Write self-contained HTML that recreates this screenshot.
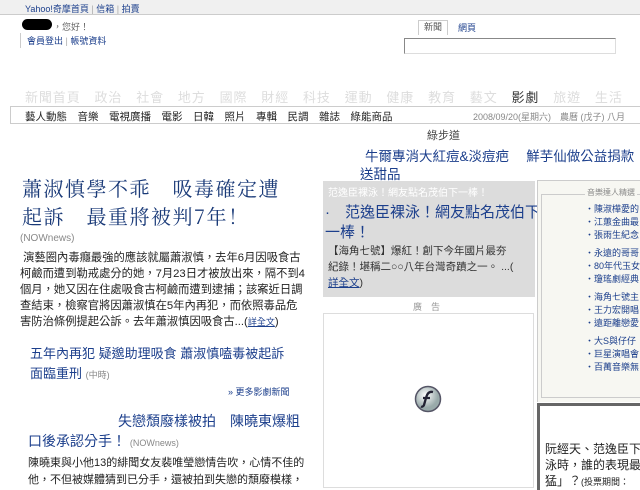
<!DOCTYPE html>
<html><head><meta charset="utf-8"><style>
*{margin:0;padding:0;box-sizing:border-box}
body{width:640px;height:490px;overflow:hidden;background:#fff;position:relative;font-family:"Liberation Sans","Noto Sans CJK TC",sans-serif;color:#333}
.a{position:absolute;white-space:nowrap}
.b{color:#1c3f8c}
</style></head><body>
<div class="a" style="left:0;top:0;width:640px;height:15px;background:#f0f0f0;border-bottom:1px solid #ccc"></div>
<div class="a" style="left:25px;top:2px;font-size:9px;color:#1c3f8c">Yahoo!奇摩首頁 <span style="color:#aaa">|</span> 信箱 <span style="color:#aaa">|</span> 拍賣</div>
<div class="a" style="left:22px;top:19px;width:30px;height:11px;background:#000;border-radius:6px"></div>
<div class="a" style="left:53px;top:20px;font-size:9px;color:#666">，您好！</div>
<div class="a" style="left:27px;top:34px;font-size:9px;color:#1c3f8c">會員登出 <span style="color:#aaa">|</span> 帳號資料</div>
<div class="a" style="left:20px;top:33px;width:1px;height:15px;background:#ccc"></div>
<div class="a" style="left:418px;top:20px;width:30px;height:15px;border:1px solid #ccc;border-bottom:none;font-size:9px;text-align:center;line-height:13px;color:#555">新聞</div>
<div class="a" style="left:458px;top:21px;font-size:9px;color:#1c3f8c">網頁</div>
<div class="a" style="left:404px;top:38px;width:212px;height:16px;border:1px solid #888;border-right-color:#ddd;border-bottom-color:#ddd;background:#fff"></div>
<div class="a" style="left:25px;top:87px;font-size:13px;color:#ddd;letter-spacing:0.9px">新聞首頁　政治　社會　地方　國際　財經　科技　運動　健康　教育　藝文　<b style="color:#333;font-weight:normal">影劇</b>　旅遊　生活</div>
<div class="a" style="left:10px;top:106px;width:640px;height:18px;border:1px solid #ccc;border-right:none"></div>
<div class="a" style="left:25px;top:109px;font-size:10.5px;color:#222;word-spacing:1px">藝人動態　音樂　電視廣播　電影　日韓　照片　專輯　民調　雜誌　綠能商品</div>
<div class="a" style="left:473px;top:110px;font-size:9px;color:#888">2008/09/20(星期六)　農曆 (戊子) 八月</div>
<div class="a" style="left:427px;top:127px;font-size:11px;color:#444">綠步道</div>
<div class="a b" style="left:365px;top:145px;font-size:13.5px">牛爾專消大紅痘&amp;淡痘疤　 鮮芋仙做公益捐款</div>
<div class="a b" style="left:360px;top:163px;font-size:13.5px">送甜品</div>
<div class="a" style="left:22px;top:174px;font-size:20px;line-height:28px;font-family:'Noto Serif CJK SC','Noto Serif CJK TC',serif;color:#1a3a78;letter-spacing:1.5px">蕭淑慎學不乖　吸毒確定遭<br>起訴　最重將被判7年！</div>
<div class="a" style="left:20px;top:233px;font-size:10px;color:#888">(NOWnews)</div>
<div class="a" style="left:20px;top:250px;font-size:11.3px;line-height:16px;color:#222">&nbsp;演藝圈內毒癮最強的應該就屬蕭淑慎，去年6月因吸食古<br>柯鹼而遭到勒戒處分的她，7月23日才被放出來，隔不到4<br>個月，她又因在住處吸食古柯鹼而遭到逮捕；該案近日調<br>查結束，檢察官將因蕭淑慎在5年內再犯，而依照毒品危<br>害防治條例提起公訴。去年蕭淑慎因吸食古...(<u class="b" style="font-size:9px">詳全文</u>)</div>
<div class="a b" style="left:30px;top:344px;font-size:13px;line-height:20px">五年內再犯 疑邈助理吸食 蕭淑慎嗑毒被起訴<br>面臨重刑 <span style="font-size:9px;color:#888">(中時)</span></div>
<div class="a" style="left:228px;top:385px;font-size:9px;color:#1c3f8c">» 更多影劇新聞</div>
<div class="a b" style="left:118px;top:411px;font-size:14px">失戀頹廢樣被拍　陳曉東爆粗</div>
<div class="a b" style="left:28px;top:431px;font-size:14px">口後承認分手！ <span style="font-size:9px;color:#888">(NOWnews)</span></div>
<div class="a" style="left:28px;top:455px;font-size:11px;line-height:17px;color:#222">陳曉東與小他13的緋聞女友裴唯瑩戀情告吹，心情不佳的<br>他，不但被媒體猜到已分手，還被拍到失戀的頹廢模樣，</div>
<div class="a" style="left:323px;top:181px;width:212px;height:116px;background:#dcdcdc"></div>
<div class="a" style="left:328px;top:184px;font-size:10px;color:#fff">范逸臣裸泳！網友點名茂伯下一棒！</div>
<div class="a b" style="left:325px;top:203px;font-size:15px;line-height:20px">·　范逸臣裸泳！網友點名茂伯下<br>一棒！</div>
<div class="a" style="left:328px;top:243px;font-size:10.5px;line-height:16px;color:#333">【海角七號】爆紅！創下今年國片最夯<br>紀錄！堪稱二○○八年台灣奇蹟之一。 ...(<br><u class="b">詳全文</u>)</div>
<div class="a" style="left:413px;top:300px;font-size:9px;color:#999">廣　告</div>
<div class="a" style="left:323px;top:313px;width:211px;height:175px;border:1px solid #ddd"></div>
<svg class="a" style="left:414px;top:385px" width="28" height="28" viewBox="0 0 28 28"><defs><radialGradient id="g" cx="40%" cy="35%"><stop offset="0" stop-color="#fff"/><stop offset="1" stop-color="#9aa"/></radialGradient></defs><circle cx="14" cy="14" r="12.5" fill="url(#g)" stroke="#556" stroke-width="1.5"/><path d="M19 7c-4-1-6 2-7 6l-2 7c-.5 1.5-2 2-3 1.5M9 13h7" stroke="#223" stroke-width="2.3" fill="none"/></svg>
<div class="a" style="left:537px;top:180px;width:103px;height:222px;background:#f7f7f2;border-left:1px solid #ccc;border-top:1px solid #ccc"></div>
<div class="a" style="left:541px;top:194px;width:99px;height:204px;border:1px solid #ccc;border-right:none"></div>
<div class="a" style="left:585px;top:187px;font-size:8px;color:#888;background:#f7f7f2;padding:0 2px">音樂達人精選</div>
<div class="a" style="left:585px;top:203px;width:55px;overflow:hidden;font-size:9px;line-height:13px;color:#1c3f8c">
・陳淑樺愛的<br>・江蕙金曲最<br>・張雨生紀念<br><div style="height:5px"></div>・永遠的哥哥<br>・80年代玉女<br>・瓊瑤劇經典<br><div style="height:5px"></div>・海角七號主<br>・王力宏開唱<br>・遠距離戀愛<br><div style="height:5px"></div>・大S與仔仔<br>・巨星演唱會<br>・百萬音樂無</div>
<div class="a" style="left:537px;top:403px;width:103px;height:87px;border-left:3px solid #666;border-top:3px solid #666"></div>
<div class="a" style="left:545px;top:441px;width:95px;overflow:hidden;font-size:12px;line-height:16px;color:#222">阮經天、范逸臣下泳<br>泳時，誰的表現最<br>猛」？<span style="font-size:9px">(投票期間：</span></div>
</body></html>
